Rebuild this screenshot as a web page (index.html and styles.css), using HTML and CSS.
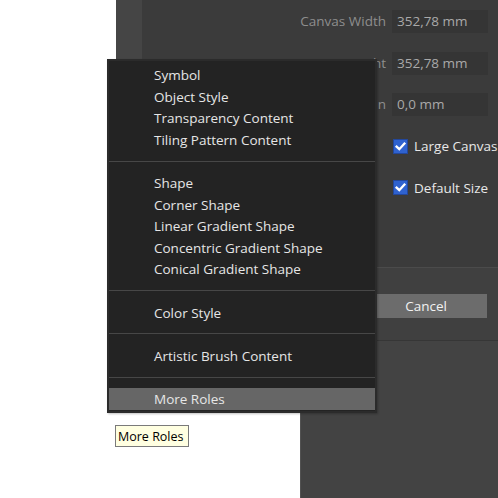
FILE: index.html
```html
<!DOCTYPE html>
<html>
<head>
<meta charset="utf-8">
<link rel="stylesheet" href="styles.css">
</head>
<body>
<div class="desktop">
  <div class="win-back"></div>

  <div class="dialog">
    <div class="strip"></div>
    <div class="dialog-main">
      <div class="form">
        <div class="lbl">Canvas Width</div>
        <div class="inp">352,78 mm</div>
        <div class="lbl">Canvas Height</div>
        <div class="inp">352,78 mm</div>
        <div class="lbl">Margin</div>
        <div class="inp">0,0 mm</div>
        <div class="check"><span class="box"><svg viewBox="0 0 15 15" width="15" height="15"><path d="M3.6 7.6 L6.3 10.2 L11.4 4.6" fill="none" stroke="#fff" stroke-width="2.3" stroke-linecap="square"/></svg></span><span class="ctext">Large Canvas</span></div>
        <div class="check"><span class="box"><svg viewBox="0 0 15 15" width="15" height="15"><path d="M3.6 7.6 L6.3 10.2 L11.4 4.6" fill="none" stroke="#fff" stroke-width="2.3" stroke-linecap="square"/></svg></span><span class="ctext">Default Size</span></div>
      </div>
      <div class="footer">
        <div class="btn">OK</div>
        <div class="btn">Cancel</div>
      </div>
    </div>
  </div>

  <div class="menu">
    <div class="item">Symbol</div>
    <div class="item">Object Style</div>
    <div class="item">Transparency Content</div>
    <div class="item">Tiling Pattern Content</div>
    <div class="sep"></div>
    <div class="item">Shape</div>
    <div class="item">Corner Shape</div>
    <div class="item">Linear Gradient Shape</div>
    <div class="item">Concentric Gradient Shape</div>
    <div class="item">Conical Gradient Shape</div>
    <div class="sep"></div>
    <div class="item">Color Style</div>
    <div class="sep"></div>
    <div class="item">Artistic Brush Content</div>
    <div class="sep"></div>
    <div class="item active">More Roles</div>
  </div>

  <div class="tooltip">More Roles</div>
</div>
</body>
</html>
```

FILE: styles.css
```css
html, body {
  margin: 0;
  padding: 0;
  background: #ffffff;
}
.desktop {
  position: relative;
  width: 498px;
  height: 498px;
  overflow: hidden;
  font-family: "Open Sans", "Noto Sans", sans-serif;
}
.win-back {
  position: absolute;
  left: 300px;
  top: 0;
  width: 198px;
  height: 498px;
  background: #434343;
  border-left: 1px solid #525252;
  box-sizing: border-box;
}
.dialog {
  position: absolute;
  left: 116px;
  top: 0;
  width: 382px;
  height: 341px;
  display: flex;
  background: #3b3b3b;
  border-bottom: 1px solid #363636;
  box-sizing: border-box;
}
.strip {
  width: 26px;
  background: #454545;
}
.dialog-main {
  flex: 1;
  display: flex;
  flex-direction: column;
}
.form {
  flex: 1;
  display: grid;
  grid-template-columns: 1fr 96px;
  grid-auto-rows: 23px;
  column-gap: 6px;
  row-gap: 18.5px;
  padding: 10px 10px 0 0;
  align-content: start;
}
.lbl {
  text-align: right;
  color: #8e8e8e;
  font-size: 13.5px;
  line-height: 23px;
  white-space: nowrap;
}
.inp {
  background: #353535;
  color: #a9a9a9;
  font-size: 13.5px;
  line-height: 23px;
  padding-left: 5px;
  white-space: nowrap;
}
.check {
  grid-column: 2;
  display: flex;
  align-items: center;
  gap: 6px;
  height: 23px;
  margin-left: 1px;
  white-space: nowrap;
  color: #e8e8e8;
  font-size: 13.5px;
}
.box {
  width: 15px;
  height: 15px;
  flex: none;
  background: #2f62cf;
  box-shadow: inset 0 0 0 1px #23479c;
  display: block;
}
.box svg { display: block; }
.footer {
  height: 73px;
  background: #404040;
  border-top: 1px solid #4b4b4b;
  display: flex;
  justify-content: flex-end;
  align-items: flex-start;
  gap: 8px;
  padding: 26px 11px 0 0;
  box-sizing: border-box;
}
.btn {
  width: 122px;
  height: 24px;
  background: #6c6c6c;
  color: #f2f2f2;
  font-size: 13.5px;
  line-height: 24px;
  text-align: center;
}
.menu {
  position: absolute;
  left: 107px;
  top: 59px;
  width: 270px;
  box-sizing: border-box;
  background: #232323;
  border: 2px solid #2b2b2b;
  padding: 3px 0 1px 0;
  box-shadow: 1px 1px 2px rgba(0,0,0,0.25);
}
.item {
  height: 21.6px;
  line-height: 23px;
  padding-left: 45px;
  color: #e6e6e6;
  font-size: 13.5px;
  white-space: nowrap;
  overflow: hidden;
}
.item.active {
  background: #666666;
}
.sep {
  height: 21.6px;
  display: flex;
  align-items: center;
}
.sep::after {
  content: "";
  display: block;
  width: 100%;
  height: 1px;
  background: #474747;
}
.tooltip {
  position: absolute;
  left: 115px;
  top: 425px;
  width: 74px;
  height: 22px;
  box-sizing: border-box;
  background: #ffffe1;
  border: 1px solid #7a7a7a;
  color: #000;
  font-size: 12.5px;
  line-height: 22px;
  padding-left: 2px;
  white-space: nowrap;
}
```
